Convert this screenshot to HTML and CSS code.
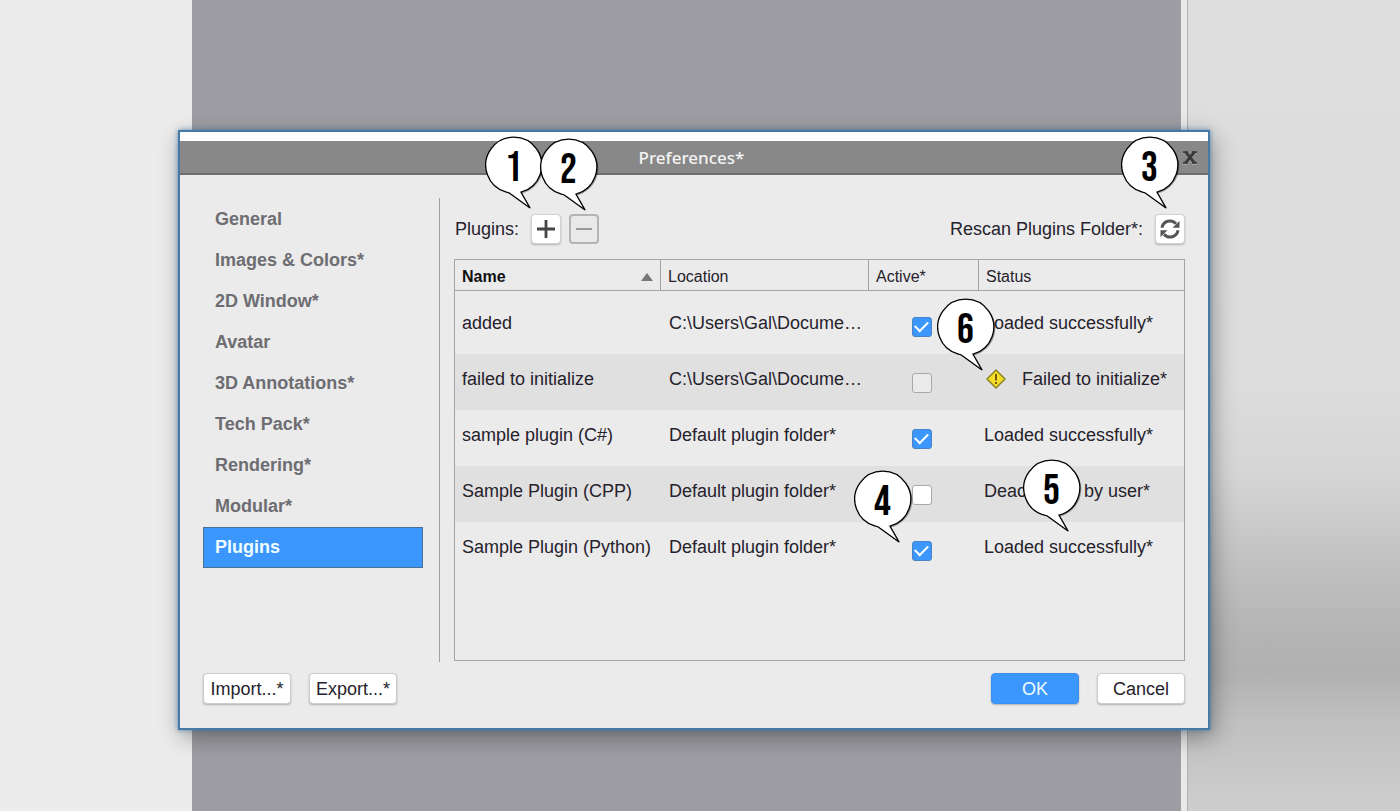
FILE: index.html
```html
<!DOCTYPE html>
<html lang="en">
<head>
<meta charset="utf-8">
<title>Preferences</title>
<link rel="stylesheet" href="styles.css">
</head>
<body>
<svg class="defs" aria-hidden="true">
  <symbol id="bubble" viewBox="0 0 60 76">
    <path d="M36 56.2A28 28 0 1 0 21.500 56.200Q24 56.500 26 58.200L45 72Z" transform="translate(1.500 1)" fill="#000" opacity=".35"/>
    <path d="M36 56.200A28 28 0 1 0 21.500 56.200Q24 56.500 26 58.200L45 72Z" fill="#fff" stroke="#000" stroke-width="1.300" stroke-linejoin="miter"/>
  </symbol>
</svg>
<div class="desktop">
  <div class="backdrop" aria-hidden="true">
    <div class="pane-left"></div>
    <div class="pane-center"></div>
    <div class="pane-right"></div>
  </div>
  <main class="dialog" role="dialog" aria-labelledby="title">
    <header class="titlebar">
      <h1 id="title">Preferences*</h1>
      <button class="close" type="button" aria-label="Close">
        <svg width="14" height="13" viewBox="0 0 14 13"><path d="M0 1.200H5M9 1.200H14M0 11.800H5M9 11.800H14" stroke="#3a3a3a" stroke-width="1.800"/><path d="M2.500 1L11.500 12M11.500 1L2.500 12" stroke="#3a3a3a" stroke-width="2.800"/></svg>
      </button>
    </header>
    <div class="content">
      <nav class="nav">
        <a href="#">General</a>
        <a href="#">Images &amp; Colors*</a>
        <a href="#">2D Window*</a>
        <a href="#">Avatar</a>
        <a href="#">3D Annotations*</a>
        <a href="#">Tech Pack*</a>
        <a href="#">Rendering*</a>
        <a href="#">Modular*</a>
        <a href="#" class="current" aria-current="page">Plugins</a>
      </nav>
      <section class="panel">
        <div class="toolbar">
          <span id="plugins-label">Plugins:</span>
          <button class="icon-btn add" type="button" aria-label="Add plugin">
            <svg width="18" height="18" viewBox="0 0 18 18"><path d="M9 0V18M0 9H18" stroke="#444" stroke-width="2.800"/></svg>
          </button>
          <button class="icon-btn remove" type="button" aria-label="Remove plugin" disabled>
            <svg width="18" height="18" viewBox="0 0 18 18"><path d="M1 9H17" stroke="#999" stroke-width="2"/></svg>
          </button>
          <label class="rescan" for="rescan">Rescan Plugins Folder*:</label>
          <button class="icon-btn" id="rescan" type="button">
            <svg width="20" height="20" viewBox="0 0 20 20"><g fill="none" stroke="#555" stroke-width="3"><path d="M2 8.800A8 8 0 0 1 16 4.800"/><path d="M18 11.200A8 8 0 0 1 4 15.200"/></g><path d="M19.500 2V8.800H12.500ZM.5 18V11.200H7.500Z" fill="#555"/></svg>
          </button>
        </div>
        <div class="table-box">
          <table>
            <colgroup><col class="c-name"><col class="c-location"><col class="c-active"><col></colgroup>
            <thead>
              <tr>
                <th class="sorted" aria-sort="ascending"><div class="sort">Name <svg width="12" height="8" viewBox="0 0 12 8"><path d="M0 8L6 0L12 8Z" fill="#777"/></svg></div></th>
                <th>Location</th><th>Active*</th><th>Status</th>
              </tr>
            </thead>
            <tbody>
              <tr><td>added</td><td class="loc">C:\Users\Gal\Docume…</td><td class="active"><input type="checkbox" aria-label="added" checked></td><td class="status">Loaded successfully*</td></tr>
              <tr><td>failed to initialize</td><td class="loc">C:\Users\Gal\Docume…</td><td class="active"><input type="checkbox" aria-label="failed to initialize" disabled></td><td class="status"><div class="failed"><svg width="20" height="20" viewBox="0 0 20 20"><path d="M10 1L19 10L10 19L1 10Z" fill="#f3df27" stroke="#8f8227" stroke-width="1.500" stroke-linejoin="round"/><path d="M10 5V11.500M10 13V15" stroke="#6b4a14" stroke-width="1.800"/></svg>Failed to initialize*</div></td></tr>
              <tr><td>sample plugin (C#)</td><td class="loc">Default plugin folder*</td><td class="active"><input type="checkbox" aria-label="sample plugin (C#)" checked></td><td class="status">Loaded successfully*</td></tr>
              <tr><td>Sample Plugin (CPP)</td><td class="loc">Default plugin folder*</td><td class="active"><input type="checkbox" aria-label="Sample Plugin (CPP)"></td><td class="status">Deactivated by user*</td></tr>
              <tr><td>Sample Plugin (Python)</td><td class="loc">Default plugin folder*</td><td class="active"><input type="checkbox" aria-label="Sample Plugin (Python)" checked></td><td class="status">Loaded successfully*</td></tr>
            </tbody>
          </table>
        </div>
      </section>
    </div>
    <footer class="footer">
      <button class="btn" type="button">Import...*</button>
      <button class="btn" type="button">Export...*</button>
      <button class="btn primary" type="button">OK</button>
      <button class="btn" type="button">Cancel</button>
    </footer>
    <div class="callout n1"><svg><use href="#bubble"/></svg><span>1</span></div>
    <div class="callout n2"><svg><use href="#bubble"/></svg><span>2</span></div>
    <div class="callout n3"><svg><use href="#bubble"/></svg><span>3</span></div>
    <div class="callout n4"><svg><use href="#bubble"/></svg><span>4</span></div>
    <div class="callout n5"><svg><use href="#bubble"/></svg><span>5</span></div>
    <div class="callout n6"><svg><use href="#bubble"/></svg><span>6</span></div>
  </main>
</div>
</body>
</html>
```

FILE: styles.css
```css
* { box-sizing: border-box; }

body {
  margin: 0;
  font: 18px/20px "Liberation Sans", Arial, sans-serif;
  color: #26222c;
}

.defs { position: absolute; width: 0; height: 0; }

.desktop {
  position: relative;
  min-height: 100vh;
  padding: 130px 190px 80px 178px;
}

.backdrop {
  position: absolute;
  inset: 0;
  display: grid;
  grid-template-columns: 192px 1fr 213px;
  background: #e9e9e9;
}
.pane-left { background: #ececec; }
.pane-center {
  margin-right: 6px;
  background: #9e9da3;
}
.pane-right {
  border-left: 1px solid #b0b0b0;
  background: linear-gradient(#dedede, #dcdcdc 48%, #d6d6d6 58%, #c4c4c4 68%, #b4b4b4 78%, #b1b1b1 83%, #c0c0c0 89%, #cecece);
}

.dialog {
  position: relative;
  border: 2px solid #4679a6;
  background: #ebebeb;
  box-shadow: 0 0 5px rgba(50, 110, 160, .7), 3px 7px 22px rgba(0, 0, 0, .35);
}

.titlebar {
  display: flex;
  align-items: center;
  height: 43px;
  padding: 1px 11px 0;
  border-top: 9px solid #fff;
  border-bottom: 2px solid #6e6e6e;
  background: #888;
}
.titlebar h1 {
  flex: 1;
  margin: 0;
  padding-left: 9px;
  font: 500 17px/24px "Noto Sans", sans-serif;
  color: #f4f4f4;
  text-align: center;
}
.close {
  display: flex;
  padding: 0;
  border: 0;
  background: none;
  filter: drop-shadow(0 1px 0 #aaa);
}

.content {
  display: grid;
  grid-template-columns: 220px 1fr;
  gap: 16px;
  padding: 23px 23px 0;
}

.nav { padding-top: 1px; }
.nav a {
  display: block;
  height: 41px;
  padding: 0 11px;
  border: 1px solid transparent;
  line-height: 39px;
  font-weight: bold;
  color: #6d6d72;
  text-decoration: none;
}
.nav .current {
  border-color: #4a7195;
  background: #3b97fd;
  color: #effcff;
}

.panel {
  padding: 16px 0 1px 14px;
  border-left: 1px solid #a0a0a0;
}

.toolbar {
  display: flex;
  align-items: center;
  margin-bottom: 15px;
  padding-left: 1px;
}
.icon-btn {
  display: grid;
  place-items: center;
  width: 30px;
  height: 30px;
  padding: 0;
  border: 1px solid #d2d2d2;
  border-radius: 4px;
  background: #fff;
  box-shadow: 0 1px 2px rgba(0, 0, 0, .25);
}
.add { margin: 0 8px 0 12px; }
.remove {
  border: 2px solid #b4b4b4;
  background: #e9e9e9;
  box-shadow: none;
}
.rescan { margin: 0 12px 0 auto; }

.table-box {
  min-height: 402px;
  border: 1px solid #a4a4a4;
}
table {
  width: 100%;
  border-collapse: separate;
  border-spacing: 0;
  table-layout: fixed;
}
.c-name { width: 206px; }
.c-location { width: 208px; }
.c-active { width: 110px; }

th {
  height: 31px;
  padding: 3px 7px 0;
  border-right: 1px solid #a4a4a4;
  border-bottom: 1px solid #a4a4a4;
  font-size: 16px;
  font-weight: normal;
  text-align: left;
}
th:last-child { border-right: 0; }
.sorted { font-weight: bold; color: #111; }
.sort {
  display: flex;
  align-items: center;
  justify-content: space-between;
}

td {
  height: 56px;
  padding: 0 0 6px 7px;
  white-space: nowrap;
}
.loc { padding-left: 8px; }
.status { padding-left: 5px; }
.active { padding: 1px 5px 0 0; text-align: center; }
tbody tr:nth-child(even) { background: #e0e0e0; }
tbody tr:first-child td {
  height: 63px;
  border-top: 7px solid transparent;
}
.failed {
  display: flex;
  align-items: center;
  gap: 16px;
  padding-left: 2px;
}

input[type="checkbox"] {
  appearance: none;
  display: inline-grid;
  place-items: center;
  width: 20px;
  height: 20px;
  margin: 0;
  border: 1px solid #a8a8a8;
  border-radius: 3px;
  background: #fff;
  vertical-align: middle;
}
input[type="checkbox"]:disabled { background: #ebebeb; }
input[type="checkbox"]:checked {
  border-color: #4a84c4;
  background: #3b97fd;
}
input[type="checkbox"]:checked::after {
  content: "";
  width: 11px;
  height: 6px;
  margin-bottom: 4px;
  border: solid #fff;
  border-width: 0 0 2px 2px;
  transform: rotate(-45deg);
}

.footer {
  display: flex;
  gap: 18px;
  padding: 11px 23px 24px;
}
.btn {
  min-width: 88px;
  height: 31px;
  padding: 0 6px;
  border: 1px solid #cdcdcd;
  border-radius: 4px;
  background: #fff;
  box-shadow: 0 1px 2px rgba(0, 0, 0, .25);
  font: inherit;
  color: #26222c;
}
.primary {
  margin-left: auto;
  border-color: #3b8ff0;
  background: #3b97fd;
  color: #effcff;
}

.callout {
  position: absolute;
  width: 60px;
  height: 76px;
}
.callout svg {
  display: block;
  width: 60px;
  height: 76px;
}
.callout span {
  position: absolute;
  inset: 0 3px auto 0;
  font: 42px/66px "Bebas Neue", "Oswald", "Liberation Sans Narrow", "Liberation Sans", sans-serif;
  color: #000;
  text-align: center;
}
.n1 { top: 4px; left: 305px; }
.n2 { top: 6px; left: 360px; }
.n3 { top: 4px; right: 27px; }
.n4 { top: 338px; left: 674px; }
.n5 { top: 327px; left: 843px; }
.n6 { top: 166px; left: 757px; }
```
